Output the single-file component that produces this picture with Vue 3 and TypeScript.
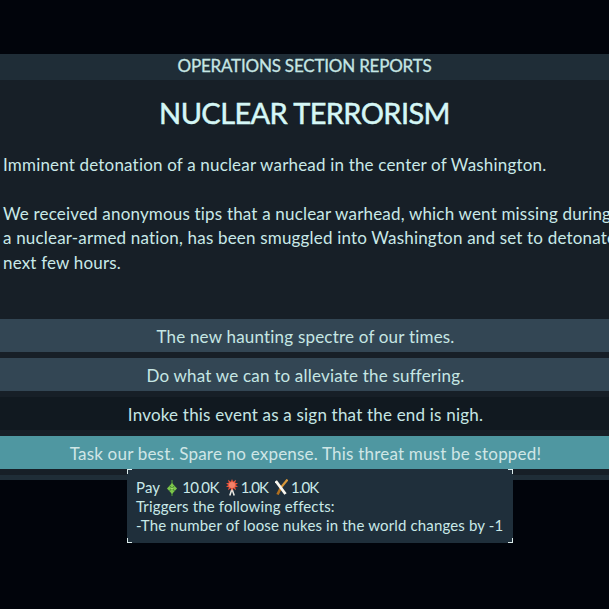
<script setup lang="ts">
const choices = [
  { text: "The new haunting spectre of our times.", kind: "normal" },
  { text: "Do what we can to alleviate the suffering.", kind: "normal" },
  { text: "Invoke this event as a sign that the end is nigh.", kind: "dark" },
  { text: "Task our best. Spare no expense. This threat must be stopped!", kind: "active" },
];
</script>

<template>
  <div class="screen">
    <section class="report">
      <header class="report__section">OPERATIONS SECTION REPORTS</header>
      <h1 class="report__title">NUCLEAR TERRORISM</h1>
      <div class="report__body">
        <p>Imminent detonation of a nuclear warhead in the center of Washington.</p>
        <p>We received anonymous tips that a nuclear warhead, which went missing during<br />a nuclear-armed nation, has been smuggled into Washington and set to detonate<br />next few hours.</p>
      </div>
      <div class="report__choices">
        <div v-for="c in choices" :key="c.text" :class="['choice', `choice--${c.kind}`]">{{ c.text }}</div>
      </div>
      <div class="report__foot" />
      <div class="tooltip">
        <i class="corner corner--tl" /><i class="corner corner--tr" /><i class="corner corner--bl" /><i class="corner corner--br" />
        <div class="tooltip__row">
          <span class="tooltip__pay">Pay</span>
          <svg class="res" width="10" height="18" viewBox="0 0 10 18">
            <path d="M5 1 V17" stroke="#4a9038" stroke-width="1.2" />
            <path d="M5 4 L10 9.5 L5 15 L0 9.5 Z" fill="#7cc64a" />
            <path d="M2.8 7 L7.6 12 M7.2 7 L2.4 12" stroke="#3d7f33" stroke-width="1" />
            <path d="M5 8.4 L6.1 9.5 L5 10.6 L3.9 9.5 Z" fill="#b4ea7c" />
          </svg>
          <span class="res__num res__num--first">10.0K</span>
          <svg class="res" width="12" height="18" viewBox="0 0 12 18">
            <path d="M6 10 L3.8 16.5 M6 10 L8.2 16.5" stroke="#ecece6" stroke-width="1.5" />
            <path d="M6 0 L7.2 2.8 L10 0.8 L9.2 4 L12 4 L9.8 6 L12 8 L9.2 8 L10 11.2 L7.2 9.2 L6 12 L4.8 9.2 L2 11.2 L2.8 8 L0 8 L2.2 6 L0 4 L2.8 4 L2 0.8 L4.8 2.8 Z" fill="#e8553c" />
            <circle cx="6" cy="6" r="3" fill="#f2826a" />
          </svg>
          <span class="res__num">1.0K</span>
          <svg class="res" width="13" height="18" viewBox="0 0 13 18">
            <path d="M12.5 0.5 L6 8.5" stroke="#d6973a" stroke-width="2.2" />
            <path d="M6 8.5 L2.5 15.5" stroke="#b0701f" stroke-width="2.6" />
            <path d="M0.8 2 L10.5 15" stroke="#f8f6ee" stroke-width="2.8" />
          </svg>
          <span class="res__num">1.0K</span>
        </div>
        <div>Triggers the following effects:</div>
        <div>-The number of loose nukes in the world changes by -1</div>
      </div>
    </section>
  </div>
</template>

<style>
html,
body {
  margin: 0;
  background: #01040b;
  overflow: hidden;
}
</style>

<style scoped>
.screen {
  width: 609px;
  height: 609px;
  padding-top: 54px;
  box-sizing: border-box;
  overflow: hidden;
  background: #01040b;
  font-family: "Lato", "Open Sans", sans-serif;
  color: #c9e9e8;
}

.report {
  position: relative;
  display: flex;
  flex-direction: column;
  height: 426px;
  background: #171f27;
}

.report__section {
  height: 26px;
  line-height: 24px;
  text-align: center;
  font-size: 17px;
  letter-spacing: -0.2px;
  -webkit-text-stroke: 0.3px #c6e6e4;
  color: #c6e6e4;
  background: #1f2d37;
}

.report__title {
  margin: 0;
  padding-top: 13px;
  height: 44px;
  line-height: 40px;
  text-align: center;
  font-size: 29px;
  font-weight: 400;
  letter-spacing: -0.6px;
  -webkit-text-stroke: 0.5px #d5f7f6;
  color: #d5f7f6;
}

.report__body {
  padding: 16px 0 0 3px;
  white-space: nowrap;
  font-size: 17px;
  letter-spacing: 0.18px;
  line-height: 24.5px;
  height: 167px;
  box-sizing: border-box;
}

.report__body p {
  margin: 0 0 24px;
}

.report__choices {
  display: flex;
  flex-direction: column;
  gap: 6px;
  margin-top: 15px;
}

.choice {
  height: 33px;
  padding-left: 2px;
  line-height: 36px;
  text-align: center;
  font-size: 17px;
  letter-spacing: 0.2px;
  color: #c6e6e4;
  background: #334654;
}

.choice--dark {
  background: #111920;
}

.choice--active {
  background: #4f97a1;
  color: #cfe6e6;
}

.report__foot {
  height: 5px;
  margin-top: auto;
  background: #1f2d37;
}

.tooltip {
  position: absolute;
  left: 127px;
  top: 415px;
  width: 386px;
  height: 74px;
  box-sizing: border-box;
  padding: 9px 9px;
  background: #1f2f3b;
  font-size: 15px;
  letter-spacing: 0.15px;
  line-height: 19px;
  white-space: nowrap;
}

.tooltip__row {
  display: flex;
  align-items: center;
  height: 19px;
}

.tooltip__pay {
  margin-right: 7px;
}

.res__num {
  margin: 0 7px 0 3px;
  letter-spacing: -0.9px;
}

.res__num--first {
  margin: 0 7px 0 5px;
  letter-spacing: -0.6px;
}

.corner {
  position: absolute;
  width: 4px;
  height: 4px;
  border: 0 solid #dcecec;
}

.corner--tl { left: 0; top: 0; border-width: 1px 0 0 1px; }
.corner--tr { right: 0; top: 0; border-width: 1px 1px 0 0; }
.corner--bl { left: 0; bottom: 0; border-width: 0 0 1px 1px; }
.corner--br { right: 0; bottom: 0; border-width: 0 1px 1px 0; }
</style>
